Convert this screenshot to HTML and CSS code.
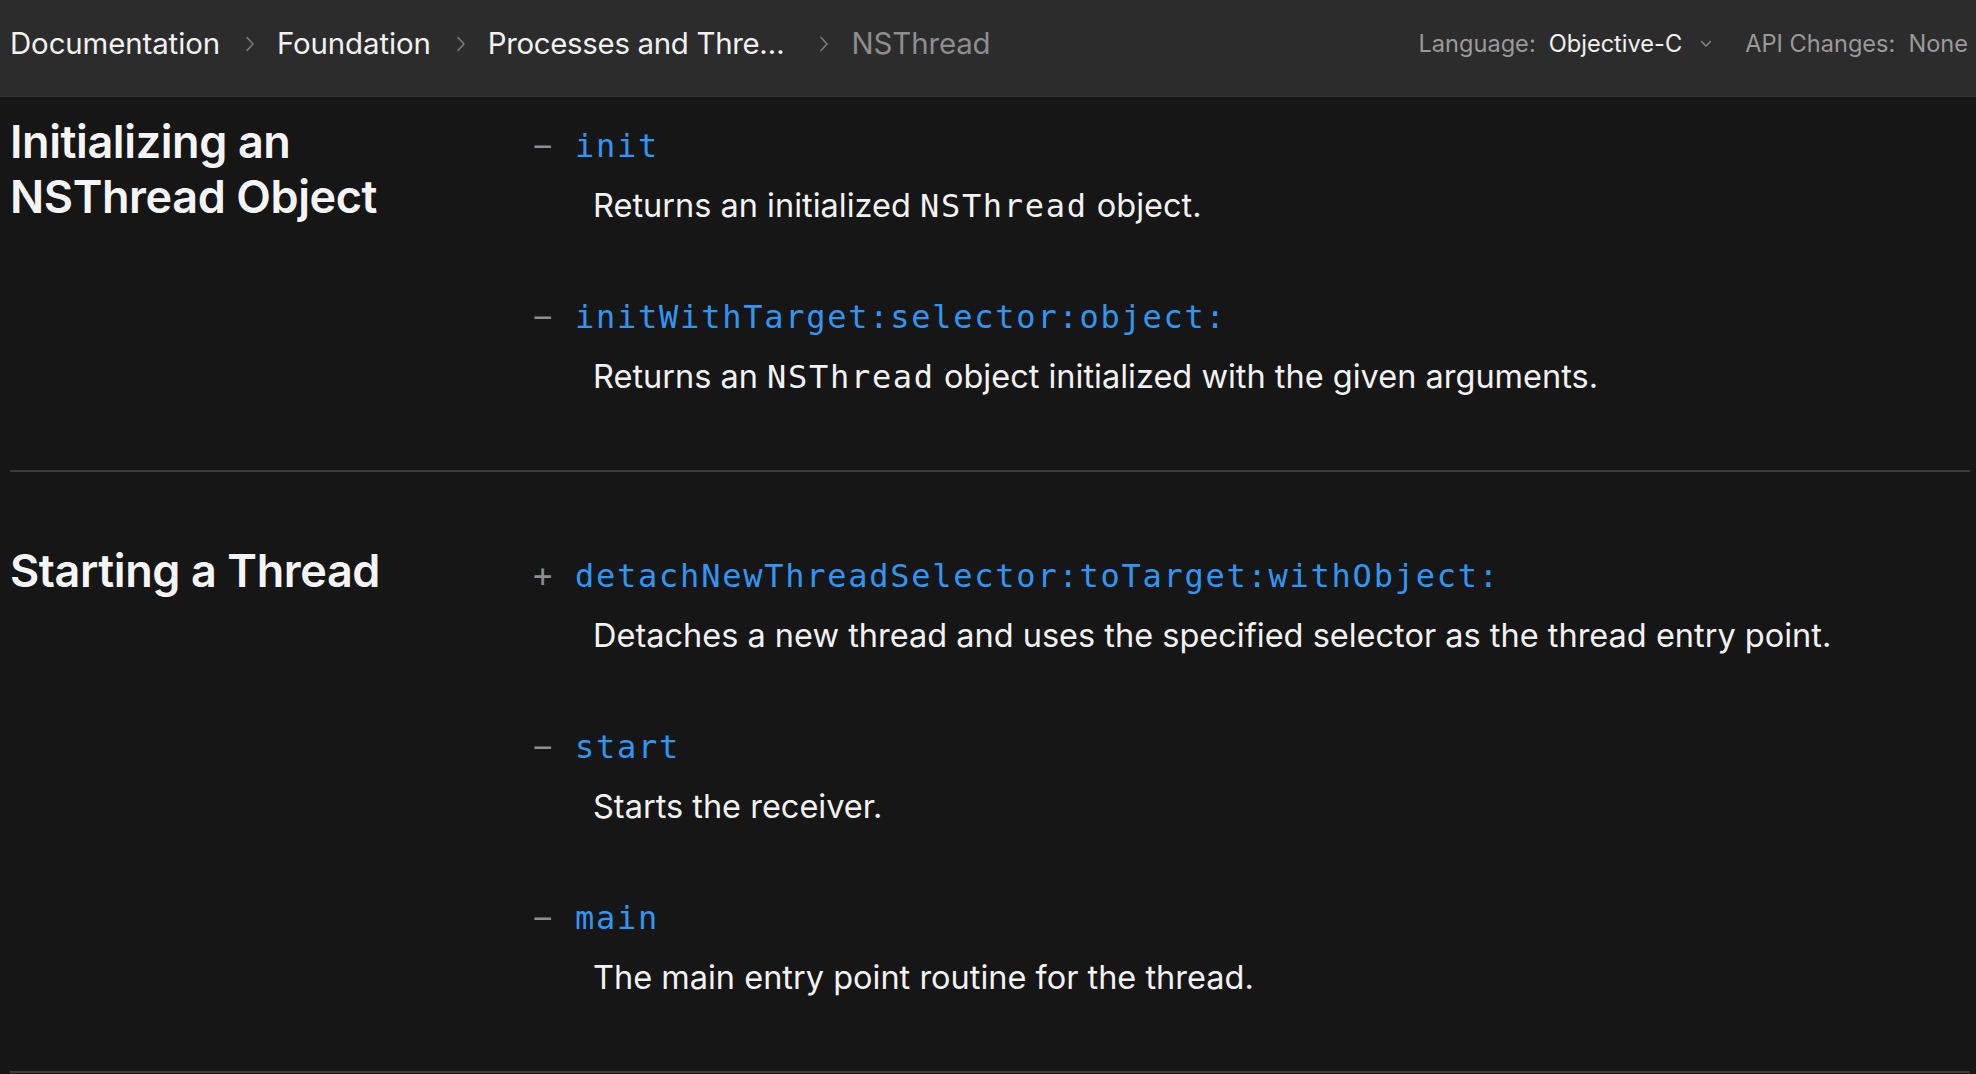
FILE: index.html
```html
<!DOCTYPE html>
<html lang="en">
<head>
<meta charset="utf-8">
<title>NSThread | Apple Developer Documentation</title>
<link rel="stylesheet" href="styles.css">
</head>
<body>
<header class="topbar">
  <nav class="crumbs">
    <a class="crumb" href="#">Documentation</a>
    <svg class="chev" viewBox="0 0 10 16" width="10" height="16"><path d="M2 1.5 L8 8 L2 14.5" /></svg>
    <a class="crumb" href="#">Foundation</a>
    <svg class="chev" viewBox="0 0 10 16" width="10" height="16"><path d="M2 1.5 L8 8 L2 14.5" /></svg>
    <a class="crumb crumb-trunc" href="#">Processes and Thre…</a>
    <svg class="chev" viewBox="0 0 10 16" width="10" height="16"><path d="M2 1.5 L8 8 L2 14.5" /></svg>
    <span class="crumb crumb-current">NSThread</span>
  </nav>
  <div class="options">
    <span class="opt-label">Language:</span>
    <span class="opt-value">Objective-C</span>
    <svg class="down" viewBox="0 0 12 8" width="12" height="8"><path d="M1.5 1.5 L6 6 L10.5 1.5" /></svg>
    <span class="opt-label opt-api">API Changes:</span>
    <span class="opt-none">None</span>
  </div>
</header>

<main class="content">
  <section class="topic topic-first">
    <h2 class="topic-title">Initializing an NSThread Object</h2>
    <div class="items">
      <div class="item">
        <div class="sig"><span class="kind">−</span> <a href="#" class="sym">init</a></div>
        <p class="desc">Returns an initialized <code>NSThread</code> object.</p>
      </div>
      <div class="item">
        <div class="sig"><span class="kind">−</span> <a href="#" class="sym">initWithTarget:selector:object:</a></div>
        <p class="desc">Returns an <code>NSThread</code> object initialized with the given arguments.</p>
      </div>
    </div>
  </section>

  <section class="topic">
    <h2 class="topic-title">Starting a Thread</h2>
    <div class="items">
      <div class="item">
        <div class="sig"><span class="kind">+</span> <a href="#" class="sym">detachNewThreadSelector:toTarget:withObject:</a></div>
        <p class="desc">Detaches a new thread and uses the specified selector as the thread entry point.</p>
      </div>
      <div class="item">
        <div class="sig"><span class="kind">−</span> <a href="#" class="sym">start</a></div>
        <p class="desc">Starts the receiver.</p>
      </div>
      <div class="item">
        <div class="sig"><span class="kind">−</span> <a href="#" class="sym">main</a></div>
        <p class="desc">The main entry point routine for the thread.</p>
      </div>
    </div>
  </section>
</main>
</body>
</html>
```

FILE: styles.css
```css
html, body {
  margin: 0;
  padding: 0;
  background: #161616;
  overflow: hidden;
}

body {
  font-family: Inter, "Noto Sans", "Liberation Sans", sans-serif;
  color: #f2f2f2;
  height: 1074px;
}

a {
  text-decoration: none;
  color: inherit;
}

/* ---------- top bar ---------- */
.topbar {
  height: 97px;
  box-sizing: border-box;
  background: #2c2c2c;
  border-bottom: 1px solid #333333;
  display: flex;
  align-items: center;
  justify-content: space-between;
  padding: 0 8px 9px 10px;
}

.crumbs {
  display: flex;
  align-items: center;
  font-size: 29.4px;
  letter-spacing: -0.1px;
}

.crumb {
  color: #f2f2f2;
  white-space: nowrap;
}

.crumb-trunc {
  margin-right: 10px;
  letter-spacing: -0.3px;
}

.crumb-current {
  color: #8e8e8e;
}

.chev {
  margin: 0 22px 0 25px;
  fill: none;
  stroke: #7c7c7c;
  stroke-width: 1.6;
  stroke-linecap: round;
  stroke-linejoin: round;
}

.options {
  display: flex;
  align-items: center;
  font-size: 23.6px;
  white-space: nowrap;
}

.opt-label {
  color: #9a9a9a;
  margin-right: 13px;
}

.opt-value {
  color: #f2f2f2;
}

.down {
  margin-left: 18px;
  fill: none;
  stroke: #8a8a8a;
  stroke-width: 1.4;
  stroke-linecap: round;
  stroke-linejoin: round;
}

.opt-api {
  margin-left: 33px;
}

.opt-none {
  color: #9a9a9a;
}

/* ---------- content ---------- */
.content {
  padding: 0 6px 0 10px;
}

.topic {
  display: grid;
  grid-template-columns: 523px 1fr;
  padding: 71px 0 73px;
  border-bottom: 2px solid #3c3c3c;
}

.topic-first {
  padding-top: 17px;
}

.topic-title {
  margin: 0;
  font-size: 45px;
  line-height: 55px;
  font-weight: 600;
  letter-spacing: -0.4px;
  color: #f5f5f7;
  max-width: 400px;
}

.items {
  padding-top: 13px;
  display: flex;
  flex-direction: column;
  gap: 71px;
}

.topic-first .items {
  padding-top: 12px;
}

.sig {
  font-family: "DejaVu Sans Mono", "Liberation Mono", monospace;
  font-size: 32px;
  letter-spacing: 1.75px;
  line-height: 40px;
  white-space: nowrap;
}

.kind {
  color: #8e8e8e;
}

.sym {
  color: #3195f3;
}

.desc {
  margin: 20px 0 0 60px;
  font-size: 32.5px;
  line-height: 40px;
  color: #f2f2f2;
}

.desc code {
  font-family: "DejaVu Sans Mono", "Liberation Mono", monospace;
  font-size: 32px;
  line-height: 1;
  letter-spacing: 1.7px;
}
```
